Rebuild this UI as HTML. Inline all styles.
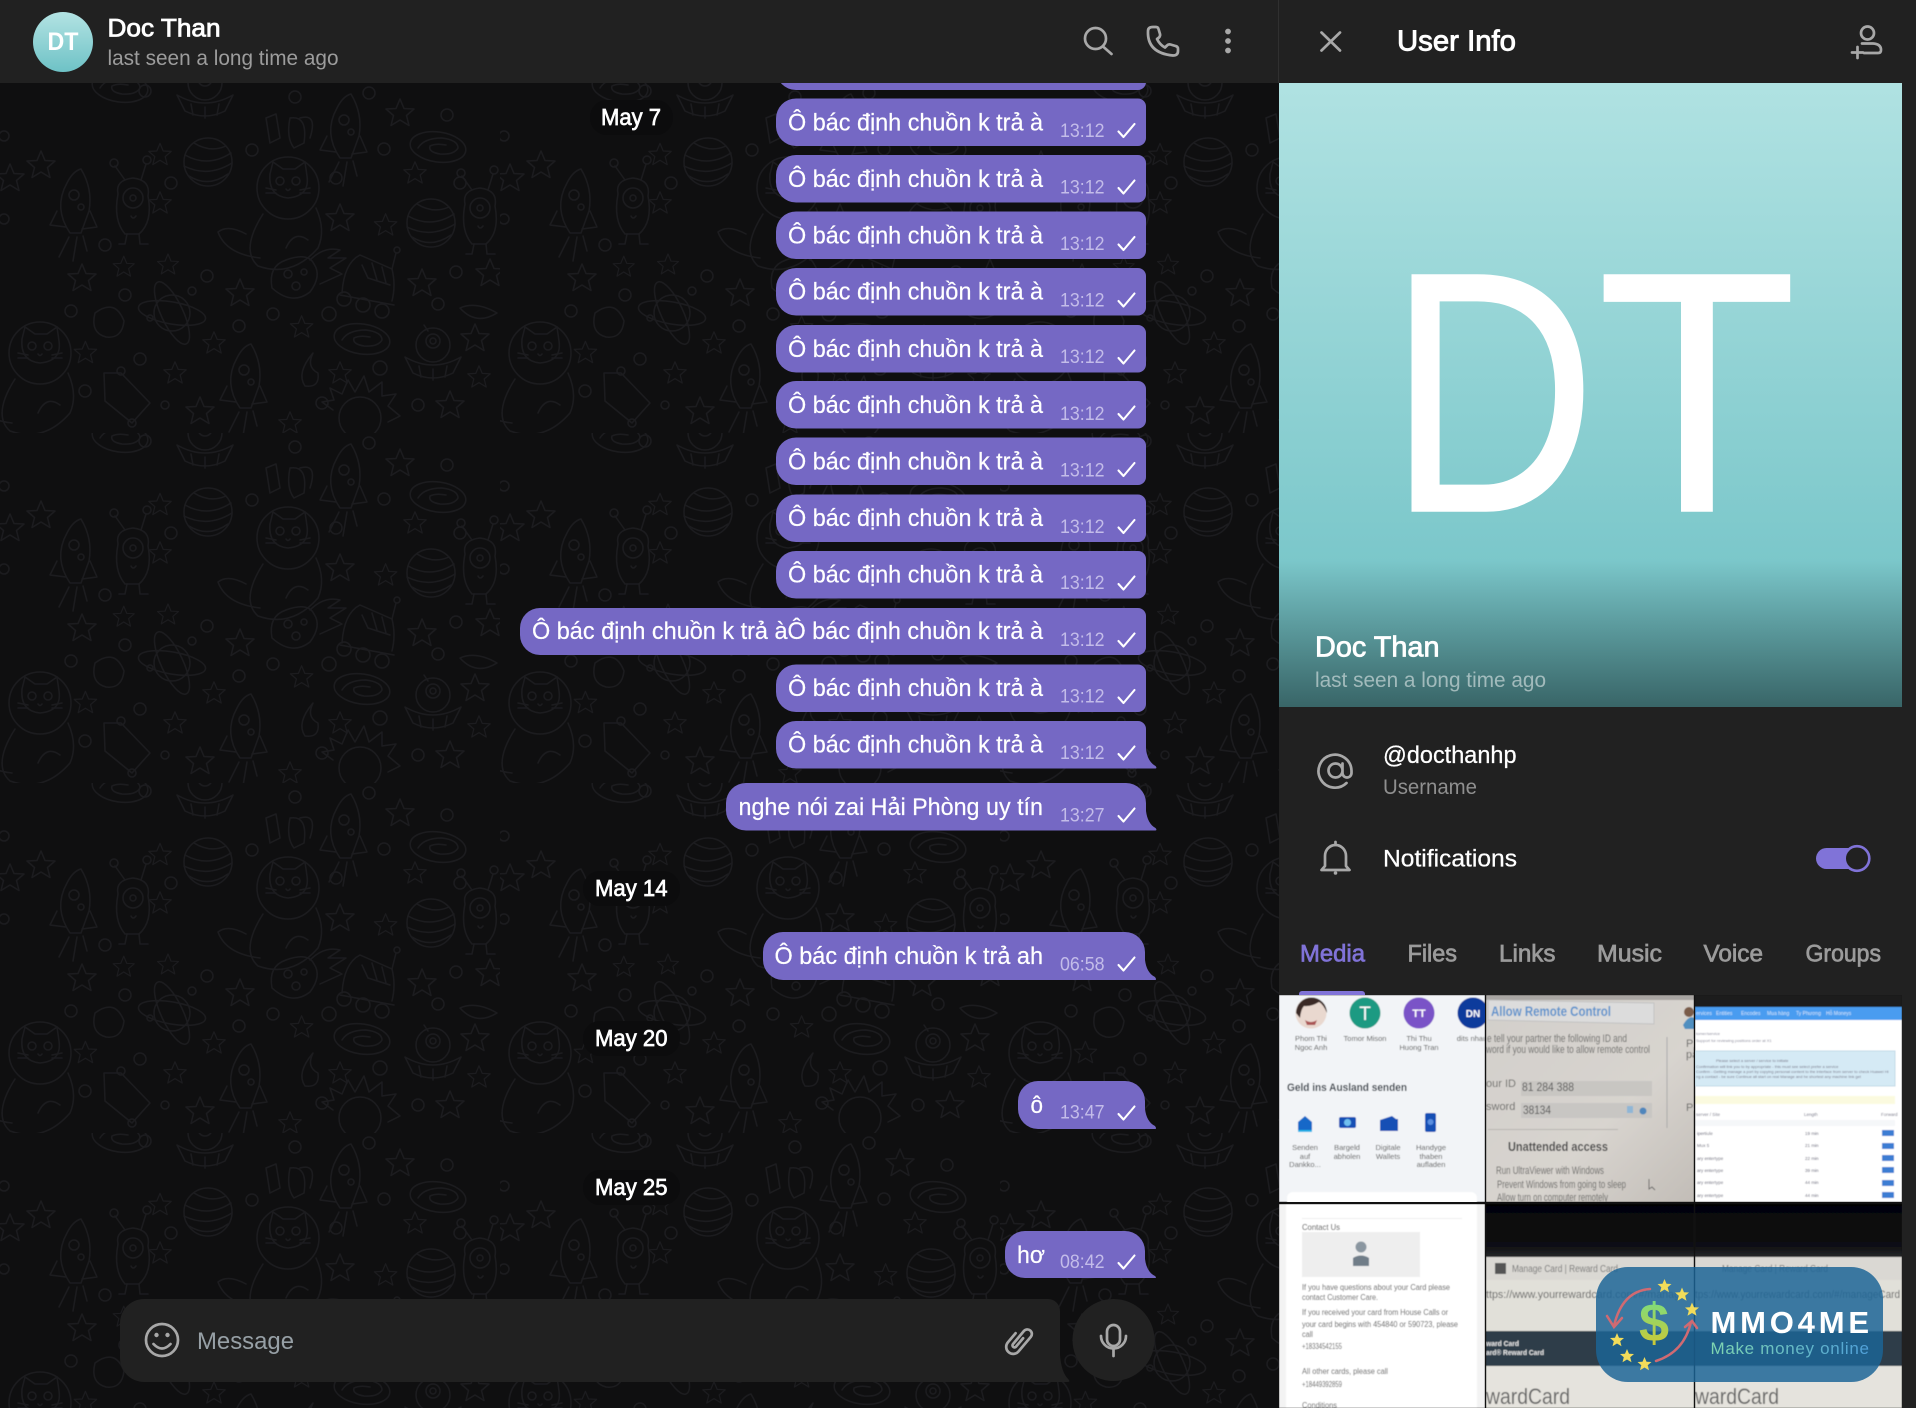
<!DOCTYPE html>
<html lang="vi"><head><meta charset="utf-8"><title>Doc Than</title>
<style>
html,body{margin:0;padding:0;background:#0f0f10;width:1916px;height:1408px;overflow:hidden}
svg{display:block;position:absolute;left:0;top:0}
text{font-family:"Liberation Sans","DejaVu Sans",sans-serif;white-space:pre}
.m{font-size:24px;fill:#fff;stroke:#fff;stroke-width:.2}
.t{font-size:19px;fill:#c3bce9}
.d{font-size:23px;fill:#fff;stroke:#fff;stroke-width:.7}
.ck{fill:none;stroke:#fff;stroke-width:2.1;stroke-linecap:round;stroke-linejoin:round}
.ic{fill:none;stroke:#a8a8a8;stroke-width:2.7;stroke-linecap:round;stroke-linejoin:round}
.tab{font-size:24px;fill:#9b9b9b;stroke:#9b9b9b;stroke-width:.7}
</style></head><body>
<svg width="1916" height="1408" viewBox="0 0 1916 1408" xmlns="http://www.w3.org/2000/svg">
<defs>
<linearGradient id="av" x1="0" y1="0" x2="0" y2="1"><stop offset="0" stop-color="#b3e3e3"/><stop offset="1" stop-color="#6ec2c6"/></linearGradient>
<linearGradient id="hero" x1="0" y1="0" x2="0" y2="1"><stop offset="0" stop-color="#b0e2e2"/><stop offset="1" stop-color="#6bbfc3"/></linearGradient>
<linearGradient id="shade" x1="0" y1="0" x2="0" y2="1"><stop offset="0" stop-color="#000" stop-opacity="0"/><stop offset="1" stop-color="#000" stop-opacity=".47"/></linearGradient>
<linearGradient id="usd" x1="0" y1="0" x2="0" y2="1"><stop offset="0" stop-color="#6fe08a"/><stop offset="1" stop-color="#d8c52a"/></linearGradient>
<linearGradient id="mk" x1="0" y1="0" x2="1" y2="0"><stop offset="0" stop-color="#7fd6b0"/><stop offset="1" stop-color="#4f9fd8"/></linearGradient>
<linearGradient id="blk" x1="0" y1="0" x2="0" y2="1"><stop offset="0" stop-color="#040406"/><stop offset=".8" stop-color="#101113"/><stop offset="1" stop-color="#26282a"/></linearGradient>
<linearGradient id="ph2" x1="0" y1="0" x2="1" y2="1"><stop offset="0" stop-color="#d2cfcb"/><stop offset=".6" stop-color="#d8d4cf"/><stop offset="1" stop-color="#c2bdb7"/></linearGradient>
<filter id="bl" x="-5%" y="-5%" width="110%" height="110%"><feGaussianBlur stdDeviation=".6"/></filter>
<clipPath id="c1"><rect x="1279" y="995" width="206" height="207"/></clipPath>
<clipPath id="c2"><rect x="1486" y="995" width="208" height="207"/></clipPath>
<clipPath id="c3"><rect x="1695" y="995" width="207" height="207"/></clipPath>
<clipPath id="c4"><rect x="1279" y="1204" width="206" height="204"/></clipPath>
<clipPath id="c5"><rect x="1486" y="1204" width="208" height="204"/></clipPath>
<clipPath id="c6"><rect x="1695" y="1204" width="207" height="204"/></clipPath>
<path id="st" d="M0-14 4-4.5 14-4 6.5 2.5 9 12.5 0 7-9 12.5-6.5 2.5-14-4-4-4.5Z"/>
<path id="sf" d="M0-7 2-2.2 7-2 3.2 1.2 4.5 6.2 0 3.5-4.5 6.2-3.2 1.2-7-2-2-2.2Z" fill="#f2dc5a"/>

<g id="pl"><circle r="24"/><path d="M-23-7Q0 6 23-9M-24 4Q0 16 24 1M-19 14Q0 26 20 12M-14-19Q2-9 18-16"/></g>
<g id="gal"><ellipse rx="28" ry="15" transform="rotate(8)"/><path d="M-20 1Q-14-9 4-9 20-7 20 1 16 8 2 7-10 5-8-1-2-4 8-2"/></g>
<g id="rk"><path d="M-5 30Q-22 5-8-20-2-32 6-34 18-14 14 8L6 30Z"/><path d="M-18 8-25 22-9 24M15 8 22 24 7 26M-6 34-16 54M2 34-2 58M8 33 12 48"/><circle cx="-1" cy="-8" r="5"/><circle cx="6" cy="4" r="3"/></g>
<g id="cat"><circle r="31"/><path d="M-18-14-15-26-5-19 7-19 17-26 19-12Q22 8 0 10-20 8-18-14Z"/><circle cx="-8" cy="-7" r="4"/><circle cx="8" cy="-7" r="4"/><path d="M-2 1Q0 4 2 1M-22 0-12 2M-22 5-12 5M12 2 22 0M12 5 22 5M-25 26Q-48 62-30 78 4 90 30 60 38 42 28 20M-28 70Q-62 66-70 44-60 36-42 46M20 52Q6 42-2 60"/></g>
<g id="ufo"><circle r="17" cy="-8"/><circle cy="-12" r="7"/><circle cy="-12" r="3"/><path d="M-28 4Q0 20 28 4L20 20Q0 30-20 20Z M-14 13-12 24M0 16V27M14 13 12 24M-9-28-5-22"/></g>
<g id="al"><path d="M-15-14Q-18-28 0-30 18-28 15-12 20 14 6 26H-8Q-20 12-15-14Z"/><circle cy="-10" r="10"/><circle cy="-10" r="3"/><path d="M-8-28-18-42M8-28 13-44M-6 26-8 36H-14M6 26 7 36H15M-2 8Q0 12 3 8"/><circle cx="-19" cy="-45" r="4"/><circle cx="14" cy="-48" r="4"/></g>
<g id="rov"><path d="M-26 10Q-24-20-8-28L24-14Q28 2 24 18"/><path d="M-6-18 0-5 22 2M4-20 9-3M14-16 18 0M-28 12 26 22"/><circle cx="-24" cy="16" r="7"/><circle cx="-5" cy="22" r="7"/><circle cx="14" cy="28" r="7"/><path d="M24-14 28-30"/><circle cx="29" cy="-33" r="3"/></g>
<g id="ast"><path d="M-28 10Q-32-12-14-18 8-26 14-14 22-2 10 14-8 28-28 10Z"/><circle cx="-12" cy="-4" r="4"/><circle cx="4" cy="-6" r="3"/><circle cx="-4" cy="8" r="4"/><path d="M10-18Q24-32 40-28L28-20 46-20 30-10 42-4 20 6"/></g>
<g id="atom"><circle r="18"/><ellipse rx="34" ry="11" transform="rotate(10)"/><ellipse rx="34" ry="11" transform="rotate(65)"/><circle cx="-22" cy="5" r="3"/><circle cx="20" cy="-22" r="4"/></g>
<g id="sun"><circle r="21"/><path d="M-27-8-38-16-26-18-30-30-18-24-12-38-5-26 4-42 9-26 22-36 22-22 36-24 28-12 40-2 28 4"/></g>
<pattern id="dd" width="500" height="350" patternUnits="userSpaceOnUse" x="0" y="83">
<g fill="none" stroke="#1c1c1f" stroke-width="1.5" stroke-linejoin="round" stroke-linecap="round">
<use href="#pl" x="208" y="79"/><use href="#pl" x="431" y="140"/>
<use href="#gal" x="438" y="64"/><use href="#gal" x="362" y="256"/><use href="#gal" x="120" y="4"/>
<use href="#rk" x="345" y="45"/><use href="#rk" x="75" y="120"/><use href="#rk" x="245" y="295"/>
<use href="#cat" x="288" y="105"/><use href="#cat" x="40" y="270"/>
<use href="#al" x="133" y="125"/><use href="#al" x="480" y="135"/>
<use href="#rov" x="368" y="200"/><use href="#ast" x="300" y="195"/><use href="#atom" x="172" y="230"/><use href="#sun" x="360" y="335"/>
<use href="#ufo" x="433" y="270"/><use href="#ufo" x="205" y="8"/>
<path d="M104 290 121 290 150 320 132 340 105 318Z"/><circle cx="121" cy="288" r="4"/><circle cx="165" cy="322" r="4"/><circle cx="132" cy="340" r="4"/>
<path d="M313 270Q296 290 305 303 320 305 318 290 306 284 313 270Z"/>
<path d="M266 35 276 31 280 55 270 60ZM290 35Q308 32 304 60L294 65Q286 55 290 35ZM300 35Q318 30 310 55"/>
<path d="M460 225Q476 218 497 230 476 243 460 225"/>
<path d="M95 230Q115 215 124 238 122 256 106 254 90 250 95 230Z"/>
<use href="#st" x="41" y="82"/><use href="#st" x="160" y="72" transform="translate(32 14) scale(.8)"/><use href="#st" x="82" y="195"/><use href="#st" x="125" y="185" transform="translate(30 45) scale(.75)"/><use href="#st" x="168" y="182" transform="translate(42 45) scale(.75)"/><use href="#st" x="240" y="210"/><use href="#st" x="340" y="135"/><use href="#st" x="382" y="140" transform="translate(80 30) scale(.8)"/><use href="#st" x="422" y="200"/><use href="#st" x="490" y="190"/><use href="#st" x="302" y="245" transform="translate(60 48) scale(.8)"/><use href="#st" x="88" y="272" transform="translate(15 52) scale(.8)"/><use href="#st" x="215" y="260" transform="translate(42 52) scale(.8)"/><use href="#st" x="175" y="290" transform="translate(35 58) scale(.8)"/><use href="#st" x="200" y="328"/><use href="#st" x="340" y="290" transform="translate(68 58) scale(.8)"/><use href="#st" x="475" y="255"/><use href="#st" x="480" y="295" transform="translate(95 58) scale(.8)"/><use href="#st" x="450" y="322"/><use href="#st" x="400" y="30"/><use href="#st" x="160" y="120" transform="translate(32 24) scale(.8)"/><use href="#st" x="415" y="90" transform="translate(83 18) scale(.8)"/><use href="#st" x="10" y="95"/><use href="#st" x="290" y="340" transform="translate(58 68) scale(.8)"/>
<circle cx="145" cy="8" r="6"/><circle cx="295" cy="14" r="6"/><circle cx="369" cy="10" r="6"/><circle cx="447" cy="32" r="6"/><circle cx="252" cy="67" r="6"/><circle cx="384" cy="66" r="6"/><circle cx="171" cy="100" r="6"/><circle cx="336" cy="95" r="6"/><circle cx="105" cy="162" r="6"/><circle cx="125" cy="212" r="6"/><circle cx="207" cy="193" r="6"/><circle cx="71" cy="228" r="6"/><circle cx="239" cy="243" r="6"/><circle cx="273" cy="231" r="6"/><circle cx="329" cy="231" r="7"/><circle cx="140" cy="276" r="6"/><circle cx="380" cy="285" r="7"/><circle cx="322" cy="320" r="6"/><circle cx="85" cy="308" r="6"/><circle cx="456" cy="189" r="6"/><circle cx="438" cy="221" r="6"/><circle cx="460" cy="100" r="6"/><circle cx="4" cy="53" r="5"/><circle cx="4" cy="136" r="5"/><circle cx="418" cy="322" r="6"/>
</g></pattern>
<path id="b" d="M796 0H1138a8 8 0 0 1 8 8V39.5a8 8 0 0 1-8 8H796a20 20 0 0 1-20-20V20a20 20 0 0 1 20-20Z" fill="#7568c4"/>
<path id="bt" d="M796 0H1138a8 8 0 0 1 8 8V28C1147 36 1150 42 1155.5 45 1157.5 47.5 1156 47.5 1153 47.5H796a20 20 0 0 1-20-20V20a20 20 0 0 1 20-20Z" fill="#7568c4"/>
<path id="ck" class="ck" d="M1118.5 33 1123.5 38.5 1134.5 25.5"/>
</defs>

<!-- chat background -->
<rect width="1279" height="1408" fill="#0f0f10"/>
<rect y="83" width="1279" height="1325" fill="url(#dd)"/>

<!-- messages -->
<use href="#b" y="42.5"/>
<g><use href="#b" y="98.5"/><text class="m" x="788" y="130.5" textLength="255" lengthAdjust="spacingAndGlyphs">Ô bác định chuồn k trả à</text><text class="t" x="1060" y="137" textLength="44.5" lengthAdjust="spacingAndGlyphs">13:12</text><use href="#ck" y="98.5"/></g>
<g><use href="#b" y="155"/><text class="m" x="788" y="187" textLength="255" lengthAdjust="spacingAndGlyphs">Ô bác định chuồn k trả à</text><text class="t" x="1060" y="193.5" textLength="44.5" lengthAdjust="spacingAndGlyphs">13:12</text><use href="#ck" y="155"/></g>
<g><use href="#b" y="211.5"/><text class="m" x="788" y="243.5" textLength="255" lengthAdjust="spacingAndGlyphs">Ô bác định chuồn k trả à</text><text class="t" x="1060" y="250" textLength="44.5" lengthAdjust="spacingAndGlyphs">13:12</text><use href="#ck" y="211.5"/></g>
<g><use href="#b" y="268"/><text class="m" x="788" y="299.5" textLength="255" lengthAdjust="spacingAndGlyphs">Ô bác định chuồn k trả à</text><text class="t" x="1060" y="306.5" textLength="44.5" lengthAdjust="spacingAndGlyphs">13:12</text><use href="#ck" y="268"/></g>
<g><use href="#b" y="325"/><text class="m" x="788" y="357" textLength="255" lengthAdjust="spacingAndGlyphs">Ô bác định chuồn k trả à</text><text class="t" x="1060" y="363" textLength="44.5" lengthAdjust="spacingAndGlyphs">13:12</text><use href="#ck" y="325"/></g>
<g><use href="#b" y="381"/><text class="m" x="788" y="413" textLength="255" lengthAdjust="spacingAndGlyphs">Ô bác định chuồn k trả à</text><text class="t" x="1060" y="420" textLength="44.5" lengthAdjust="spacingAndGlyphs">13:12</text><use href="#ck" y="381"/></g>
<g><use href="#b" y="437.5"/><text class="m" x="788" y="469.5" textLength="255" lengthAdjust="spacingAndGlyphs">Ô bác định chuồn k trả à</text><text class="t" x="1060" y="476.5" textLength="44.5" lengthAdjust="spacingAndGlyphs">13:12</text><use href="#ck" y="437.5"/></g>
<g><use href="#b" y="494.5"/><text class="m" x="788" y="526" textLength="255" lengthAdjust="spacingAndGlyphs">Ô bác định chuồn k trả à</text><text class="t" x="1060" y="533" textLength="44.5" lengthAdjust="spacingAndGlyphs">13:12</text><use href="#ck" y="494.5"/></g>
<g><use href="#b" y="551"/><text class="m" x="788" y="582.5" textLength="255" lengthAdjust="spacingAndGlyphs">Ô bác định chuồn k trả à</text><text class="t" x="1060" y="589" textLength="44.5" lengthAdjust="spacingAndGlyphs">13:12</text><use href="#ck" y="551"/></g>
<g><path d="M540 608H1138a8 8 0 0 1 8 8V647a8 8 0 0 1-8 8H540a20 20 0 0 1-20-20V628a20 20 0 0 1 20-20Z" fill="#7568c4"/><text class="m" x="532" y="639" textLength="511" lengthAdjust="spacingAndGlyphs">Ô bác định chuồn k trả àÔ bác định chuồn k trả à</text><text class="t" x="1060" y="646" textLength="44.5" lengthAdjust="spacingAndGlyphs">13:12</text><use href="#ck" y="608"/></g>
<g><use href="#b" y="664.5"/><text class="m" x="788" y="696" textLength="255" lengthAdjust="spacingAndGlyphs">Ô bác định chuồn k trả à</text><text class="t" x="1060" y="702.5" textLength="44.5" lengthAdjust="spacingAndGlyphs">13:12</text><use href="#ck" y="664.5"/></g>
<g><use href="#bt" y="721"/><text class="m" x="788" y="752.5" textLength="255" lengthAdjust="spacingAndGlyphs">Ô bác định chuồn k trả à</text><text class="t" x="1060" y="759" textLength="44.5" lengthAdjust="spacingAndGlyphs">13:12</text><use href="#ck" y="721"/></g>
<g><path d="M746 783H1126a20 20 0 0 1 20 20V811C1147 819 1150 825 1155.5 828 1157.5 830.5 1156 830.5 1153 830.5H746a20 20 0 0 1-20-20V803a20 20 0 0 1 20-20Z" fill="#7568c4"/><text class="m" x="738.5" y="815" textLength="304.5" lengthAdjust="spacingAndGlyphs">nghe nói zai Hải Phòng uy tín</text><text class="t" x="1060" y="821.5" textLength="44.5" lengthAdjust="spacingAndGlyphs">13:27</text><use href="#ck" y="783"/></g>
<g><rect x="583" y="871" width="97" height="35" rx="17" fill="#0c0c0d"/><text class="d" x="595" y="896" textLength="72.5" lengthAdjust="spacingAndGlyphs">May 14</text></g>
<g><path d="M783 932H1125a20 20 0 0 1 20 20V960C1146 968 1149 974 1155 977 1157 980 1156 980 1153 980H783a20 20 0 0 1-20-20V952a20 20 0 0 1 20-20Z" fill="#7568c4"/><text class="m" x="774.5" y="964" textLength="268.5" lengthAdjust="spacingAndGlyphs">Ô bác định chuồn k trả ah</text><text class="t" x="1060" y="970.5" textLength="44.5" lengthAdjust="spacingAndGlyphs">06:58</text><use href="#ck" y="932"/></g>
<g><rect x="583" y="1021" width="97" height="35" rx="17" fill="#0c0c0d"/><text class="d" x="595" y="1046" textLength="72.5" lengthAdjust="spacingAndGlyphs">May 20</text></g>
<g><path d="M1038 1081H1125a20 20 0 0 1 20 20V1109C1146 1117 1149 1123 1155 1126 1157 1129 1156 1129 1153 1129H1038a20 20 0 0 1-20-20V1101a20 20 0 0 1 20-20Z" fill="#7568c4"/><text class="m" x="1030.5" y="1113" textLength="12.5" lengthAdjust="spacingAndGlyphs">ô</text><text class="t" x="1060" y="1118.5" textLength="44.5" lengthAdjust="spacingAndGlyphs">13:47</text><use href="#ck" y="1081"/></g>
<g><rect x="583" y="1170" width="97" height="35" rx="17" fill="#0c0c0d"/><text class="d" x="595" y="1195" textLength="72.5" lengthAdjust="spacingAndGlyphs">May 25</text></g>
<g><path d="M1025 1231H1125a20 20 0 0 1 20 20V1259C1146 1267 1149 1273 1155 1276 1157 1278 1156 1278 1153 1278H1025a20 20 0 0 1-20-20V1251a20 20 0 0 1 20-20Z" fill="#7568c4"/><text class="m" x="1017" y="1263" textLength="28" lengthAdjust="spacingAndGlyphs">hơ</text><text class="t" x="1060" y="1268" textLength="44.5" lengthAdjust="spacingAndGlyphs">08:42</text><use href="#ck" y="1230"/></g>
<g><rect x="590" y="100" width="83" height="35" rx="17" fill="#0c0c0d"/><text class="d" x="601" y="125" textLength="60" lengthAdjust="spacingAndGlyphs">May 7</text></g>

<!-- composer -->
<path d="M144 1299H1048a12 12 0 0 1 12 12V1355C1061 1366 1063 1374 1069 1380 1070 1382 1069 1382 1066 1382H144a24 24 0 0 1-24-24V1323a24 24 0 0 1 24-24Z" fill="#212121"/>
<circle cx="162" cy="1340" r="16" class="ic"/><circle cx="156.5" cy="1335" r="2.2" fill="#a8a8a8"/><circle cx="167.5" cy="1335" r="2.2" fill="#a8a8a8"/><path class="ic" d="M153.5 1344Q162 1353 170.500 1344"/>
<text x="197" y="1349" font-size="24" fill="#97a0a6" textLength="97" lengthAdjust="spacingAndGlyphs">Message</text>
<g transform="translate(1019 1340) rotate(40)"><path class="ic" d="M-7-3V9a7 7 0 0 0 14 0V-10a4.5 4.5 0 0 0-9 0V7a2 2 0 0 0 4 0V-4"/></g>
<circle cx="1113.5" cy="1340" r="41" fill="#212121"/>
<rect x="1107" y="1325" width="13" height="21" rx="6.5" class="ic"/><path class="ic" d="M1101 1336a12.5 12.5 0 0 0 25 0M1113.5 1349V1356"/>

<!-- right column bg -->
<rect x="1279" y="0" width="637" height="1408" fill="#212121"/>
<!-- headers -->
<rect width="1916" height="83" fill="#212121"/>
<rect x="1278" y="0" width="1" height="83" fill="#303030"/>
<circle cx="63" cy="42" r="30" fill="url(#av)"/>
<text x="47.5" y="50" font-size="25" font-weight="700" fill="#fff" textLength="31" lengthAdjust="spacingAndGlyphs">DT</text>
<text x="107.5" y="36.7" font-size="25" fill="#fff" stroke="#fff" stroke-width=".8" textLength="113" lengthAdjust="spacingAndGlyphs">Doc Than</text>
<text x="107.5" y="65" font-size="21.5" fill="#9c9c9c" textLength="231" lengthAdjust="spacingAndGlyphs">last seen a long time ago</text>
<circle cx="1095.5" cy="38.5" r="10.5" class="ic"/><path class="ic" d="M1103 46.5 1111.5 54"/>
<path class="ic" d="M1153 27H1156Q1158 27 1158.5 29L1160 34Q1160.5 36 1159 37.5L1157 39Q1160 45 1165 47.5L1167 45.5Q1168.5 44 1170.5 44.5L1175.5 46Q1178 46.5 1178 49V51Q1178 55.5 1173 55.5 1147 53 1148 31 1148 27 1153 27Z"/>
<circle cx="1228" cy="31.5" r="2.9" fill="#a8a8a8"/><circle cx="1228" cy="41" r="2.9" fill="#a8a8a8"/><circle cx="1228" cy="50.5" r="2.9" fill="#a8a8a8"/>
<path class="ic" d="M1321.5 32.5 1340 50.5M1340 32.5 1321.5 50.5"/>
<text x="1397" y="50.5" font-size="29" fill="#fff" stroke="#fff" stroke-width=".9" textLength="119" lengthAdjust="spacingAndGlyphs">User Info</text>
<circle cx="1867.5" cy="33" r="6.5" class="ic"/><path class="ic" d="M1862 43.5H1873Q1881 44 1881 50 1881 53 1878 53H1864M1852 52.5H1863M1857.5 47V58"/>

<!-- hero -->
<rect x="1279" y="83" width="623" height="624" fill="url(#hero)"/>
<text x="1388.5" y="511" font-size="343" fill="#fff" stroke="#fff" stroke-width="1.5" textLength="208" lengthAdjust="spacingAndGlyphs">D</text>
<text x="1597" y="511" font-size="343" fill="#fff" stroke="#fff" stroke-width="1.5" textLength="200" lengthAdjust="spacingAndGlyphs">T</text>
<rect x="1279" y="560" width="623" height="147" fill="url(#shade)"/>
<text x="1315" y="656.5" font-size="29" fill="#fff" stroke="#fff" stroke-width=".8" textLength="124.5" lengthAdjust="spacingAndGlyphs">Doc Than</text>
<text x="1315" y="687" font-size="21.5" fill="#fff" fill-opacity=".5" textLength="231" lengthAdjust="spacingAndGlyphs">last seen a long time ago</text>

<!-- info -->
<path class="ic" d="M1346.5 783A16.5 16.5 0 1 1 1351.5 770.500V773A4.5 4.5 0 0 1 1342.5 773V763.5M1342.5 770.5A7 7 0 1 1 1328.5 770.5 7 7 0 1 1 1342.5 770.5Z"/>
<text x="1383" y="763" font-size="24.5" fill="#fff" stroke="#fff" stroke-width=".25" textLength="133.5" lengthAdjust="spacingAndGlyphs">@docthanhp</text>
<text x="1383" y="794" font-size="21.5" fill="#8f8f8f" textLength="94" lengthAdjust="spacingAndGlyphs">Username</text>
<path class="ic" d="M1335.5 842V845M1325 866V856A10.5 11 0 0 1 1346 856V866L1349.5 870H1321.5Z"/><circle cx="1335.5" cy="873" r="1.8" fill="#a8a8a8"/>
<text x="1383" y="866.5" font-size="24.5" fill="#fff" stroke="#fff" stroke-width=".25" textLength="134" lengthAdjust="spacingAndGlyphs">Notifications</text>
<rect x="1816" y="848" width="50" height="21" rx="10.5" fill="#8073d8"/>
<circle cx="1857" cy="858.5" r="12.3" fill="#212121" stroke="#8073d8" stroke-width="2.6"/>

<!-- tabs -->
<text x="1300" y="961.500" font-size="24" fill="#8073d8" stroke="#8073d8" stroke-width=".7" textLength="65" lengthAdjust="spacingAndGlyphs">Media</text>
<text class="tab" x="1407.5" y="961.5" textLength="49.5" lengthAdjust="spacingAndGlyphs">Files</text>
<text class="tab" x="1499" y="961.5" textLength="56.5" lengthAdjust="spacingAndGlyphs">Links</text>
<text class="tab" x="1597" y="961.5" textLength="65" lengthAdjust="spacingAndGlyphs">Music</text>
<text class="tab" x="1703.5" y="961.5" textLength="59.5" lengthAdjust="spacingAndGlyphs">Voice</text>
<text class="tab" x="1805.5" y="961.5" textLength="75.5" lengthAdjust="spacingAndGlyphs">Groups</text>
<path d="M1299 995V994a3 3 0 0 1 3-3H1362a3 3 0 0 1 3 3V995Z" fill="#8073d8"/>

<!-- media grid -->
<rect x="1279" y="995" width="623" height="413" fill="#111"/>
<g clip-path="url(#c1)" filter="url(#bl)">
<rect x="1279" y="995" width="206" height="207" fill="#f2f4f7"/>
<circle cx="1311" cy="1013" r="15.5" fill="#e9d8cf"/><path d="M1296 1013a15.5 15.5 0 0 1 31 0q-4-9-8-11-8 5-15 4-3 3-4 12Z" fill="#3a2a26"/><path d="M1305 1020q6 4 12 0l-2 5h-8Z" fill="#a55"/>
<circle cx="1365" cy="1013" r="15.5" fill="#1c9a82"/><text x="1365" y="1020" font-size="19" fill="#fff" text-anchor="middle">T</text>
<circle cx="1419" cy="1013" r="15.5" fill="#7a52c7"/><text x="1419" y="1017" font-size="11" font-weight="700" fill="#fff" text-anchor="middle">TT</text>
<circle cx="1473" cy="1013" r="15.5" fill="#103a9c"/><text x="1473" y="1017" font-size="10" font-weight="700" fill="#fff" text-anchor="middle">DN</text>
<g font-size="7.5" fill="#555" text-anchor="middle">
<text x="1311" y="1041">Phom Thi</text><text x="1311" y="1050">Ngoc Anh</text><text x="1365" y="1041">Tomor Mison</text><text x="1419" y="1041">Thi Thu</text><text x="1419" y="1050">Huong Tran</text><text x="1472" y="1041">dits nhau</text>
<text x="1305" y="1150">Senden</text><text x="1305" y="1159">auf</text><text x="1305" y="1167">Dankko...</text><text x="1347" y="1150">Bargeld</text><text x="1347" y="1159">abholen</text><text x="1388" y="1150">Digitale</text><text x="1388" y="1159">Wallets</text><text x="1431" y="1150">Handyge</text><text x="1431" y="1159">thaben</text><text x="1431" y="1167">aufladen</text>
</g>
<text x="1287" y="1091" font-size="11" font-weight="700" fill="#333a44" textLength="120" lengthAdjust="spacingAndGlyphs">Geld ins Ausland senden</text>
<path d="M1298 1122h14l-7-6ZM1298 1122h14v9h-14Z" fill="#1468c8"/><rect x="1298" y="1130" width="14" height="2" fill="#29b6e8"/>
<rect x="1339" y="1117" width="17" height="11" rx="2" fill="#1350b5"/><circle cx="1347.5" cy="1122.5" r="3.5" fill="#6fc0f0"/>
<path d="M1380 1120l12-4 4 3h2v12h-18Z" fill="#1350b5"/>
<rect x="1425" y="1113" width="11" height="19" rx="2" fill="#1350b5"/><circle cx="1430.5" cy="1122" r="3" fill="#5a8ee0"/>
<rect x="1287" y="1192" width="190" height="20" rx="6" fill="#fff"/>
</g>
<g clip-path="url(#c2)" filter="url(#bl)">
<rect x="1486" y="995" width="208" height="207" fill="url(#ph2)"/>
<rect x="1486" y="995" width="208" height="5" fill="#a9a6a3"/>
<path d="M1488 1000 1654 1003V1024L1488 1020Z" fill="#dcdcdc" stroke="#c2c2c2"/>
<text x="1491" y="1016" font-size="13.5" font-weight="700" fill="#5d93cc" textLength="120" lengthAdjust="spacingAndGlyphs">Allow Remote Control</text>
<g font-size="11" fill="#6a6a68">
<text x="1487" y="1042" textLength="140" lengthAdjust="spacingAndGlyphs">e tell your partner the following ID and</text>
<text x="1486" y="1053" textLength="164" lengthAdjust="spacingAndGlyphs">word if you would like to allow remote control</text>
<text x="1486" y="1087">our ID</text><text x="1486" y="1110">sword</text>
<text x="1496" y="1174" textLength="108" lengthAdjust="spacingAndGlyphs">Run UltraViewer with Windows</text>
<text x="1497" y="1188" textLength="129" lengthAdjust="spacingAndGlyphs">Prevent Windows from going to sleep</text>
<text x="1497" y="1201" textLength="111" lengthAdjust="spacingAndGlyphs">Allow turn on computer remotely</text>
<text x="1686" y="1047">Pl</text><text x="1686" y="1058">pa</text><text x="1686" y="1111">Pa</text>
</g>
<rect x="1521" y="1081" width="131" height="15" fill="#c8c6c2"/><rect x="1521" y="1103" width="131" height="15" fill="#c8c6c3"/>
<text x="1522" y="1091" font-size="12" fill="#555" textLength="52" lengthAdjust="spacingAndGlyphs">81 284 388</text>
<text x="1523" y="1114" font-size="12" fill="#555" textLength="28" lengthAdjust="spacingAndGlyphs">38134</text>
<text x="1508" y="1151" font-size="13" font-weight="700" fill="#4a4a4a" textLength="100" lengthAdjust="spacingAndGlyphs">Unattended access</text>
<rect x="1627" y="1106" width="6" height="7" fill="#8fb6d6"/><circle cx="1643" cy="1111" r="3.5" fill="#4f86bc"/>
<path d="M1667 1037V1128" stroke="#aaa" fill="none"/><rect x="1488" y="1129" width="130" height="1" fill="#b8b5b1"/>
<circle cx="1689" cy="1012" r="5" fill="#7a5b48"/><path d="M1683 1025q6-10 11-7v11h-9Z" fill="#4f8fc0"/>
<path d="M1649 1179v10l3-2 3 3" stroke="#666" fill="none"/>
</g>
<g clip-path="url(#c3)" filter="url(#bl)">
<rect x="1695" y="995" width="207" height="207" fill="#fff"/>
<rect x="1695" y="995" width="207" height="12" fill="#1d1d1d"/>
<rect x="1695" y="1007" width="207" height="13" fill="#4a9cf0"/>
<g font-size="5" fill="#d8e9fb"><text x="1696" y="1015">ervices</text><text x="1716" y="1015">Entities</text><text x="1741" y="1015">Encodes</text><text x="1767" y="1015">Mua hàng</text><text x="1796" y="1015">Ty Phương</text><text x="1826" y="1015">Hỗ Moneys</text></g>
<g font-size="4" fill="#889"><text x="1696" y="1035">tomer/service</text><text x="1696" y="1042">Support for reviewing positions order at X1</text></g>
<rect x="1695" y="1051" width="200" height="35" fill="#d5eaf5" stroke="#c2d9e6"/>
<g font-size="4" fill="#778"><text x="1716" y="1062">Please select a server / service to initiate</text><text x="1696" y="1068">Confirmation will link you to by appropriate - this must see select prefer a service</text><text x="1696" y="1073">Confirm - Getting manage a port by copying personal content to the interface from server to check Huawei Hi</text><text x="1696" y="1078">ng a contact - be sure Continue all start on real Manage and he shortest any machine link get</text></g>
<rect x="1695" y="1096" width="200" height="8" fill="#fbfadf"/>
<g font-size="4.5" fill="#778"><text x="1696" y="1116">server / Site</text><text x="1804" y="1116">Length</text><text x="1881" y="1116">Forward</text></g>
<rect x="1695" y="1120" width="200" height="6" fill="#f5f7f9"/>
<g font-size="4.5" fill="#667"><text x="1697" y="1135">ipertiule</text><text x="1697" y="1147">Mux 5</text><text x="1697" y="1160">ary entertype</text><text x="1697" y="1172">ary entertype</text><text x="1697" y="1184">ary entertype</text><text x="1697" y="1197">ary entertype</text><text x="1805" y="1135">19 min</text><text x="1805" y="1147">21 min</text><text x="1805" y="1160">22 min</text><text x="1805" y="1172">39 min</text><text x="1805" y="1184">44 min</text><text x="1805" y="1197">44 min</text></g>
<g fill="#3d7dd3"><rect x="1882" y="1130" width="12" height="6"/><rect x="1882" y="1143" width="12" height="6"/><rect x="1882" y="1155" width="12" height="6"/><rect x="1882" y="1167" width="12" height="6"/><rect x="1882" y="1180" width="12" height="6"/><rect x="1882" y="1192" width="12" height="6"/></g>
</g>
<g clip-path="url(#c4)" filter="url(#bl)">
<rect x="1279" y="1204" width="206" height="204" fill="#f3f3f3"/>
<rect x="1286" y="1204" width="191" height="204" fill="#fff"/>
<rect x="1302" y="1218" width="160" height="1" fill="#eee"/>
<text x="1302" y="1230" font-size="8.5" fill="#444" textLength="38" lengthAdjust="spacingAndGlyphs">Contact Us</text>
<rect x="1302" y="1232" width="118" height="45" fill="#eeeeee"/>
<circle cx="1361" cy="1247" r="5.5" fill="#8a96a0"/><path d="M1353 1266v-8q8-5 16 0v8Z" fill="#6f7d88"/>
<g font-size="8" fill="#555">
<text x="1302" y="1290" textLength="148" lengthAdjust="spacingAndGlyphs">If you have questions about your Card please</text>
<text x="1302" y="1300" textLength="76" lengthAdjust="spacingAndGlyphs">contact Customer Care.</text>
<text x="1302" y="1315" textLength="146" lengthAdjust="spacingAndGlyphs">If you received your card from House Calls or</text>
<text x="1302" y="1327" textLength="156" lengthAdjust="spacingAndGlyphs">your card begins with 454840 or 590723, please</text>
<text x="1302" y="1337" textLength="11" lengthAdjust="spacingAndGlyphs">call</text>
<text x="1302" y="1349" textLength="40" lengthAdjust="spacingAndGlyphs">+18334542155</text>
<text x="1302" y="1374" textLength="86" lengthAdjust="spacingAndGlyphs">All other cards, please call</text>
<text x="1302" y="1387" textLength="40" lengthAdjust="spacingAndGlyphs">+18449392859</text>
<text x="1302" y="1408" textLength="35" lengthAdjust="spacingAndGlyphs">Conditions</text>
</g>
</g>
<g clip-path="url(#c5)" filter="url(#bl)">
<rect x="1486" y="1204" width="208" height="53" fill="url(#blk)"/>
<rect x="1486" y="1257" width="208" height="23" fill="#dad8d3"/><rect x="1486" y="1280" width="208" height="51" fill="#e1e0d9"/>
<rect x="1486" y="1331" width="208" height="35" fill="#2e3c4a"/><rect x="1486" y="1366" width="208" height="42" fill="#e5e3dd"/>
<rect x="1495" y="1263" width="11" height="11" fill="#555"/>
<text x="1512" y="1272" font-size="10" fill="#777" font-family="Liberation Serif,serif" textLength="106" lengthAdjust="spacingAndGlyphs">Manage Card | Reward Card</text>
<text x="1486" y="1298" font-size="11" fill="#666" textLength="200" lengthAdjust="spacingAndGlyphs">ttps://www.yourrewardcard.com/#/manage</text>
<text x="1486" y="1346" font-size="7.5" font-weight="700" fill="#e8e8e8" textLength="33" lengthAdjust="spacingAndGlyphs">ward Card</text>
<text x="1486" y="1355" font-size="7.5" font-weight="700" fill="#e8e8e8" textLength="58" lengthAdjust="spacingAndGlyphs">ard® Reward Card</text>
<text x="1486" y="1404" font-size="22" fill="#666" textLength="84" lengthAdjust="spacingAndGlyphs">wardCard</text>
</g>
<g clip-path="url(#c6)" filter="url(#bl)">
<rect x="1695" y="1204" width="207" height="53" fill="url(#blk)"/>
<rect x="1695" y="1257" width="207" height="23" fill="#dad8d3"/><rect x="1695" y="1280" width="207" height="51" fill="#e1e0d9"/>
<rect x="1695" y="1331" width="207" height="35" fill="#2e3c4a"/><rect x="1695" y="1366" width="207" height="42" fill="#e5e3dd"/>
<text x="1722" y="1272" font-size="10" fill="#777" font-family="Liberation Serif,serif" textLength="106" lengthAdjust="spacingAndGlyphs">Manage Card | Reward Card</text>
<text x="1695" y="1298" font-size="11" fill="#666" textLength="205" lengthAdjust="spacingAndGlyphs">tps://www.yourrewardcard.com/#/manageCard</text>
<text x="1695" y="1404" font-size="22" fill="#666" textLength="84" lengthAdjust="spacingAndGlyphs">wardCard</text>
</g>
<!-- watermark -->
<rect x="1596" y="1267" width="287" height="115" rx="32" fill="#1b6496" fill-opacity=".84"/>
<text x="1654" y="1341" font-size="54" font-weight="700" fill="url(#usd)" text-anchor="middle">$</text>
<path d="M1650 1289Q1622 1291 1614 1326M1607 1316 1614 1327 1622 1318" fill="none" stroke="#d06a72" stroke-width="2.5" stroke-linecap="round"/>
<path d="M1656 1361Q1684 1352 1691 1322M1685 1327 1692 1321 1697 1328" fill="none" stroke="#d06a72" stroke-width="2.5" stroke-linecap="round"/>
<use href="#sf" x="1664.5" y="1286"/><use href="#sf" x="1682" y="1294.5"/><use href="#sf" x="1692" y="1309.5"/><use href="#sf" x="1617" y="1340"/><use href="#sf" x="1627" y="1356"/><use href="#sf" x="1644.5" y="1364"/>
<text x="1710.5" y="1333" font-size="31" font-weight="700" fill="#fff" textLength="158.5" lengthAdjust="spacing">MMO4ME</text>
<text x="1710.5" y="1354" font-size="17" fill="url(#mk)" textLength="158.5" lengthAdjust="spacing">Make money online</text>
</svg>
</body></html>
